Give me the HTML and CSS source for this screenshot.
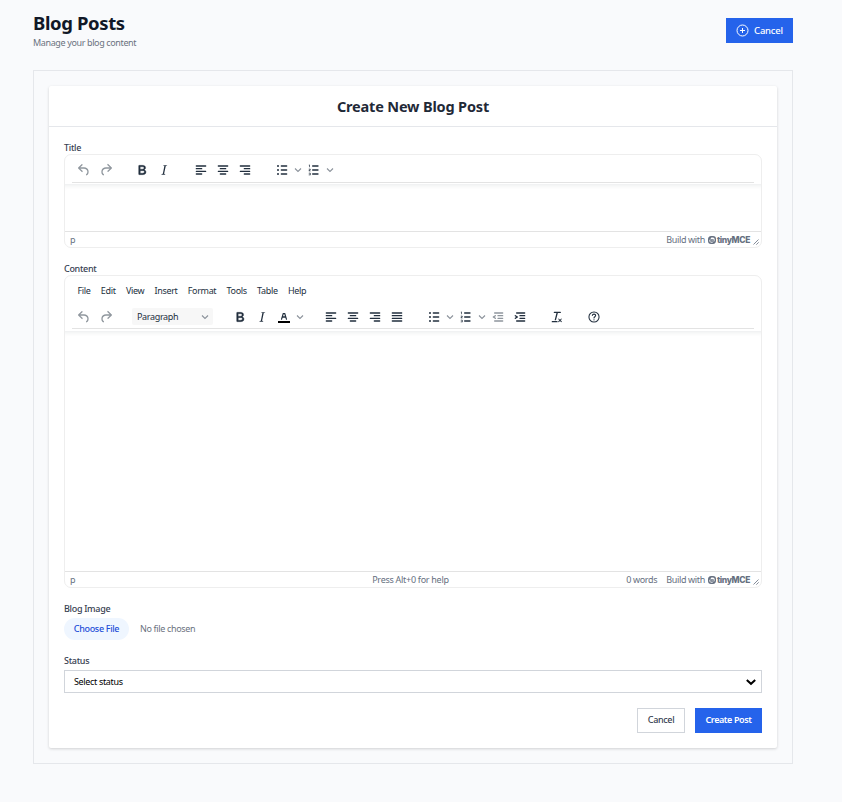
FILE: index.html
```html
<!DOCTYPE html>
<html lang="en">
<head>
<meta charset="utf-8">
<title>Blog Posts</title>
<link rel="stylesheet" href="styles.css">
</head>
<body>
<svg class="sprite" aria-hidden="true">
  <symbol id="undo" viewBox="0 0 24 24"><path d="M6.4 8H12c3.7 0 6.2 2 6.8 5.1.6 2.7-.4 5.6-2.3 6.8a1 1 0 0 1-1-1.8c1.1-.6 1.8-2.7 1.4-4.6-.5-2.1-2.1-3.5-4.9-3.5H6.4l3.3 3.3a1 1 0 1 1-1.4 1.4l-5-5a1 1 0 0 1 0-1.4l5-5a1 1 0 0 1 1.4 1.4L6.4 8Z"/></symbol>
  <symbol id="redo" viewBox="0 0 24 24"><path d="M17.6 10H12c-2.8 0-4.4 1.4-4.9 3.5-.4 2 .3 4 1.4 4.6a1 1 0 1 1-1 1.8c-2-1.2-2.9-4.1-2.3-6.8.6-3 3-5.1 6.8-5.1h5.6l-3.3-3.3a1 1 0 1 1 1.4-1.4l5 5a1 1 0 0 1 0 1.400l-5 5a1 1 0 0 1-1.4-1.4l3.3-3.3Z"/></symbol>
  <symbol id="bold" viewBox="0 0 24 24"><path fill-rule="evenodd" d="M7.8 19c-.3 0-.5 0-.6-.2l-.2-.5V5.7c0-.2 0-.4.2-.5l.6-.2h5c1.5 0 2.7.3 3.5 1 .7.6 1.1 1.4 1.1 2.5a3 3 0 0 1-.6 1.9c-.4.6-1 1-1.6 1.2.4.1.9.3 1.3.6s.8.7 1 1.2c.4.4.5 1 .5 1.6 0 1.3-.4 2.3-1.3 3-.8.7-2.1 1-3.8 1H7.8Zm5-8.3c.6 0 1.2-.1 1.6-.5.4-.3.6-.7.6-1.3 0-1.1-.8-1.7-2.3-1.7H9.3v3.5h3.4Zm.5 6c.7 0 1.3-.1 1.7-.4.4-.4.6-.9.6-1.5s-.2-1-.7-1.4c-.4-.3-1-.4-2-.4H9.4v3.8h4Z" stroke="currentColor" stroke-width=".5"/></symbol>
  <symbol id="italic" viewBox="0 0 24 24"><path d="m16.7 4.7-.1.9h-.3c-.6 0-1 0-1.4.3-.3.3-.4.6-.5 1.1l-2.1 9.8v.6c0 .5.4.8 1.4.8h.2l-.2.8H8l.2-.8h.2c1.1 0 1.8-.5 2-1.5l2-9.8.1-.5c0-.6-.4-.8-1.4-.8h-.3l.2-.9h5.8Z"/></symbol>
  <symbol id="left" viewBox="0 0 24 24"><path d="M5 5h14a1 1 0 0 1 0 2H5a1 1 0 1 1 0-2Zm0 4h8a1 1 0 0 1 0 2H5a1 1 0 1 1 0-2Zm0 8h8a1 1 0 0 1 0 2H5a1 1 0 0 1 0-2Zm0-4h14a1 1 0 0 1 0 2H5a1 1 0 0 1 0-2Z"/></symbol>
  <symbol id="center" viewBox="0 0 24 24"><path d="M5 5h14a1 1 0 0 1 0 2H5a1 1 0 1 1 0-2Zm3 4h8a1 1 0 0 1 0 2H8a1 1 0 1 1 0-2Zm0 8h8a1 1 0 0 1 0 2H8a1 1 0 0 1 0-2Zm-3-4h14a1 1 0 0 1 0 2H5a1 1 0 0 1 0-2Z"/></symbol>
  <symbol id="right" viewBox="0 0 24 24"><path d="M5 5h14a1 1 0 0 1 0 2H5a1 1 0 1 1 0-2Zm6 4h8a1 1 0 0 1 0 2h-8a1 1 0 0 1 0-2Zm0 8h8a1 1 0 0 1 0 2h-8a1 1 0 0 1 0-2Zm-6-4h14a1 1 0 0 1 0 2H5a1 1 0 0 1 0-2Z"/></symbol>
  <symbol id="justify" viewBox="0 0 24 24"><path d="M5 5h14a1 1 0 0 1 0 2H5a1 1 0 1 1 0-2Zm0 4h14a1 1 0 0 1 0 2H5a1 1 0 1 1 0-2Zm0 4h14a1 1 0 0 1 0 2H5a1 1 0 0 1 0-2Zm0 4h14a1 1 0 0 1 0 2H5a1 1 0 0 1 0-2Z"/></symbol>
  <symbol id="bullets" viewBox="0 0 24 24"><path d="M11 5h8a1 1 0 0 1 0 2h-8a1 1 0 0 1 0-2Zm0 6h8a1 1 0 0 1 0 2h-8a1 1 0 0 1 0-2Zm0 6h8a1 1 0 0 1 0 2h-8a1 1 0 0 1 0-2Z"/><circle cx="6" cy="6" r="1.5"/><circle cx="6" cy="12" r="1.5"/><circle cx="6" cy="18" r="1.5"/></symbol>
  <symbol id="numbers" viewBox="0 0 24 24"><path d="M10 17h8a1 1 0 0 1 0 2h-8a1 1 0 0 1 0-2Zm0-6h8a1 1 0 0 1 0 2h-8a1 1 0 0 1 0-2Zm0-6h8a1 1 0 0 1 0 2h-8a1 1 0 1 1 0-2ZM6 4v3.500c0 .3-.2.5-.5.5a.5.5 0 0 1-.5-.5V5h-.5a.5.5 0 0 1 0-1H6Zm-1 8.800.2.2h1.300c.3 0 .5.2.5.5s-.2.5-.5.5H4.900a1 1 0 0 1-.9-1V13c0-.4.3-.8.6-1l1.200-.4.2-.3a.2.2 0 0 0-.2-.2H4.500a.5.5 0 0 1-.5-.5c0-.3.2-.5.5-.5h1.600c.5 0 .9.4.9 1v.1c0 .4-.3.8-.6 1l-1.200.4-.2.3ZM7 17v2c0 .6-.4 1-1 1H4.500a.5.5 0 0 1 0-1h1.200c.2 0 .3-.1.3-.3 0-.2-.1-.3-.3-.3H4.400a.4.4 0 1 1 0-.8h1.300c.2 0 .3-.1.3-.3 0-.2-.1-.3-.3-.3H4.500a.5.5 0 1 1 0-1H6c.6 0 1 .4 1 1Z"/></symbol>
  <symbol id="outdent" viewBox="0 0 24 24"><path d="M7 5h12a1 1 0 0 1 0 2H7a1 1 0 1 1 0-2Zm5 4h7a1 1 0 0 1 0 2h-7a1 1 0 0 1 0-2Zm0 4h7a1 1 0 0 1 0 2h-7a1 1 0 0 1 0-2Zm-5 4h12a1 1 0 0 1 0 2H7a1 1 0 0 1 0-2Zm1.600-3.800a1 1 0 0 1-1.200 1.600l-3-2a1 1 0 0 1 0-1.600l3-2a1 1 0 0 1 1.200 1.600L6.800 12l1.800 1.200Z"/></symbol>
  <symbol id="indent" viewBox="0 0 24 24"><path d="M7 5h12a1 1 0 0 1 0 2H7a1 1 0 1 1 0-2Zm5 4h7a1 1 0 0 1 0 2h-7a1 1 0 0 1 0-2Zm0 4h7a1 1 0 0 1 0 2h-7a1 1 0 0 1 0-2Zm-5 4h12a1 1 0 0 1 0 2H7a1 1 0 0 1 0-2Zm-2.600-3.800L6.200 12l-1.800-1.200a1 1 0 0 1 1.200-1.600l3 2a1 1 0 0 1 0 1.600l-3 2a1 1 0 1 1-1.200-1.600Z"/></symbol>
  <symbol id="color" viewBox="0 0 24 24"><path class="swatch" d="M3 18h18v3H3z"/><path fill-rule="evenodd" d="M8.700 16h-.8a.5.5 0 0 1-.5-.6l2.700-9c.1-.3.3-.4.5-.4h2.800c.2 0 .4.1.5.4l2.700 9a.5.5 0 0 1-.5.600h-.8a.5.5 0 0 1-.4-.4l-.7-2.200c0-.3-.3-.4-.5-.4h-3.400c-.2 0-.4.1-.5.4l-.7 2.200c0 .3-.2.4-.4.4Zm2.600-7.600-.6 2a.5.5 0 0 0 .5.600h1.600a.5.5 0 0 0 .5-.6l-.6-2c0-.3-.3-.4-.5-.4h-.4c-.2 0-.4.1-.5.4Z"/></symbol>
  <symbol id="clear" viewBox="0 0 24 24"><path d="M13.200 6a1 1 0 0 1 0 .2l-2.600 10a1 1 0 0 1-1 .8h-.2a.8.8 0 0 1-.8-1l2.600-10H8a1 1 0 1 1 0-2h9a1 1 0 0 1 0 2h-3.800ZM5 18h7a1 1 0 0 1 0 2H5a1 1 0 0 1 0-2Zm13 1.500L16.500 18 15 19.500a.7.7 0 0 1-1-1l1.500-1.500-1.500-1.500a.7.7 0 0 1 1-1l1.500 1.500 1.500-1.500a.7.7 0 0 1 1 1L17.500 17l1.500 1.500a.7.7 0 0 1-1 1Z"/></symbol>
  <symbol id="help" viewBox="0 0 24 24"><path d="M9.500 9.600c.2-1.200 1.200-1.900 2.500-1.900 1.500 0 2.500.9 2.500 2.100 0 1.800-2.500 1.800-2.500 3.700" fill="none" stroke="currentColor" stroke-width="1.600" stroke-linecap="round"/><circle cx="12" cy="16.200" r="1"/><circle cx="12" cy="12" r="7.600" fill="none" stroke="currentColor" stroke-width="1.600"/></symbol>
  <symbol id="chev" viewBox="0 0 10 10"><path d="M2 3.500 5 6.500 8 3.500" fill="none" stroke="currentColor" stroke-width="1.100"/></symbol>
  <symbol id="tiny" viewBox="0 0 10 10"><path fill-rule="evenodd" d="M4.200 1H6a3 3 0 0 1 3 3v1.500A3.500 3.500 0 0 1 5.800 9H4a3 3 0 0 1-3-3V4.500A3.500 3.500 0 0 1 4.200 1Zm.2 1.500L6 2.400A1.600 1.600 0 0 1 7.600 4v1.300a2.100 2.100 0 0 1-.9 1.800v-2.900H3.600A2 2 0 0 1 4.400 2.500ZM2.400 5.800v-.9l.9-.6v2.500h3a2 2 0 0 1-2.300.8A1.700 1.700 0 0 1 2.400 5.800Zm2.200-.3v.6h1v-.6Z"/></symbol>
  <symbol id="grip" viewBox="0 0 8 8"><path d="M1.500 6.500 6.500 1.500M4.300 6.700 6.700 4.300" fill="none" stroke="currentColor" stroke-width=".8"/></symbol>
</svg>

<main class="page">
  <header class="page-head">
    <div>
      <h1>Blog Posts</h1>
      <p class="subtitle">Manage your blog content</p>
    </div>
    <button class="btn primary toggle">
      <svg viewBox="0 0 13 13"><circle cx="6.500" cy="6.500" r="5.500"/><path d="M6.500 4v5M4 6.500h5"/></svg><span>Cancel</span>
    </button>
  </header>

  <section class="panel">
    <form class="card">
      <h2>Create New Blog Post</h2>
      <div class="fields">
        <label class="label">Title</label>
        <div class="editor small">
          <div class="toolbar">
            <div class="group history"><svg><use href="#undo"/></svg><svg><use href="#redo"/></svg></div>
            <div class="group style"><svg><use href="#bold"/></svg><svg><use href="#italic"/></svg></div>
            <div class="group"><svg><use href="#left"/></svg><svg><use href="#center"/></svg><svg><use href="#right"/></svg></div>
            <div class="group"><svg><use href="#bullets"/></svg><svg class="chev"><use href="#chev"/></svg><svg><use href="#numbers"/></svg><svg class="chev"><use href="#chev"/></svg></div>
          </div>
          <div class="canvas"></div>
          <div class="status"><span>p</span><span class="brand"><span>Build with</span><svg class="mark"><use href="#tiny"/></svg><b>tinyMCE</b></span><svg class="grip"><use href="#grip"/></svg></div>
        </div>

        <label class="label">Content</label>
        <div class="editor large">
          <nav class="menu"><span>File</span><span>Edit</span><span>View</span><span>Insert</span><span>Format</span><span>Tools</span><span>Table</span><span>Help</span></nav>
          <div class="toolbar">
            <div class="group history"><svg><use href="#undo"/></svg><svg><use href="#redo"/></svg></div>
            <div class="block-select"><span>Paragraph</span><svg class="chev"><use href="#chev"/></svg></div>
            <div class="group style"><svg><use href="#bold"/></svg><svg><use href="#italic"/></svg><svg><use href="#color"/></svg><svg class="chev"><use href="#chev"/></svg></div>
            <div class="group"><svg><use href="#left"/></svg><svg><use href="#center"/></svg><svg><use href="#right"/></svg><svg><use href="#justify"/></svg></div>
            <div class="group"><svg><use href="#bullets"/></svg><svg class="chev"><use href="#chev"/></svg><svg><use href="#numbers"/></svg><svg class="chev"><use href="#chev"/></svg><svg class="off"><use href="#outdent"/></svg><svg><use href="#indent"/></svg></div>
            <div class="group"><svg><use href="#clear"/></svg></div>
            <div class="group"><svg><use href="#help"/></svg></div>
          </div>
          <div class="canvas"></div>
          <div class="status"><span>p</span><span class="hint">Press Alt+0 for help</span><span class="words">0 words</span><span class="brand"><span>Build with</span><svg class="mark"><use href="#tiny"/></svg><b>tinyMCE</b></span><svg class="grip"><use href="#grip"/></svg></div>
        </div>

        <label class="label">Blog Image</label>
        <div class="file"><span class="choose">Choose File</span><span class="none">No file chosen</span></div>

        <label class="label">Status</label>
        <div class="select"><span>Select status</span><svg viewBox="0 0 12 12"><path d="M1.800 4 6 7.800 10.200 4" fill="none" stroke="#000" stroke-width="2"/></svg></div>

        <div class="actions"><button type="button" class="btn outline">Cancel</button><button type="button" class="btn primary create">Create Post</button></div>
      </div>
    </form>
  </section>
</main>
</body>
</html>
```
FILE: styles.css
```css
* { box-sizing: border-box; }
body { margin: 0; background: #f9fafc; font: 9px/14px "Noto Sans", sans-serif; letter-spacing: -0.34px; color: #222f3e; }
h1, h2, p { margin: 0; }
svg { display: block; flex: none; fill: currentColor; }
.sprite { position: absolute; width: 0; height: 0; }

.page { width: 760px; margin-left: 33px; }
.page-head { height: 70px; display: flex; justify-content: space-between; align-items: flex-start; }
h1 { margin-top: 10px; font-size: 18.5px; line-height: 26px; font-weight: 700; letter-spacing: -0.38px; color: #111827; }
.subtitle { color: #6b7280; letter-spacing: -0.37px; }

.btn { height: 25px; border: 0; padding: 0 0 1px; font: inherit; letter-spacing: inherit; display: flex; align-items: center; justify-content: center; }
.primary { background: #2563eb; color: #fff; }
.toggle { width: 67px; margin-top: 18px; padding: 0; gap: 5px; font-size: 9.5px; font-weight: 500; letter-spacing: -0.2px; }
.toggle svg { width: 13px; height: 13px; fill: none; stroke: currentColor; }

.panel { height: 694px; border: 1px solid #e5e7eb; padding: 15px; }
.card { height: 662px; background: #fff; border-radius: 2px; box-shadow: 0 1px 3px rgba(0,0,0,.17); }
h2 { height: 41px; border-bottom: 1px solid #e5e7eb; text-align: center; font-size: 14.5px; line-height: 41px; font-weight: 700; letter-spacing: -0.17px; color: #1f2937; }
.fields { padding: 14px 15px 0; display: flex; flex-direction: column; }
.label { height: 13px; line-height: 14px; font-weight: 500; letter-spacing: -0.3px; color: #374151; }

.editor { display: flex; flex-direction: column; border: 1px solid #eee; border-radius: 7px; background: #fff; overflow: hidden; }
.small { height: 94px; margin-bottom: 14px; }
.large { height: 313px; margin-bottom: 14px; }
.toolbar { height: 28px; margin: 0 7px; padding-top: 4px; display: flex; align-items: center; border-bottom: 1px solid #e3e3e3; }
.small .toolbar { padding-top: 3px; }
.group { display: flex; align-items: center; margin-left: 15px; }
.group svg { width: 22px; height: 16px; }
.group svg.chev { width: 10px; height: 10px; color: #8b929b; }
.group .off { opacity: .5; }
.group.history { margin: 0 0 0 .5px; color: #222f3e80; }
.group.style { margin-left: 14.5px; }
.swatch { fill: #000; }
.block-select { width: 81px; height: 17px; margin: 0 0 0 15.5px; padding: 0 3px 0 5px; display: flex; align-items: center; justify-content: space-between; background: #f7f7f7; border-radius: 2px; }
.block-select + .group.style { margin-left: 15.5px; }
.block-select .chev { width: 10px; height: 10px; color: #8b929b; }
.canvas { flex: 1; margin-top: 2px; box-shadow: inset 0 5px 5px -4px rgba(34,47,62,.1); }
.small .canvas { margin-top: 1px; }
.menu { height: 25px; padding: 8px 0 0 12.5px; display: flex; gap: 10.3px; }
.status { height: 16px; padding: 0 1px 0 5px; border-top: 1px solid #e3e3e3; display: flex; align-items: center; color: #667080; }
.brand { margin-left: auto; display: flex; align-items: center; }
.mark { width: 10px; height: 10px; margin: 0 0 0 2px; }
.brand b { font: 800 8.5px/14px Inter, sans-serif; letter-spacing: -.38px; }
.grip { width: 8px; height: 8px; margin: 4px 0 0 2px; }
.hint { margin-left: 297px; letter-spacing: -0.28px; }
.words { margin-left: auto; }
.words + .brand { margin-left: 9px; }

.file { height: 22px; margin: 3px 0 14px; display: flex; align-items: center; gap: 11px; color: #6b7280; }
.choose { width: 65px; height: 22px; line-height: 22px; border-radius: 11px; background: #eff6ff; color: #1d4ed8; text-align: center; font-weight: 500; }
.select { height: 23px; margin-top: 3px; padding: 0 4px 0 9px; border: 1px solid #d1d5db; display: flex; align-items: center; justify-content: space-between; color: #000; }
.select svg { width: 12px; height: 12px; }
.actions { margin-top: 15px; display: flex; justify-content: flex-end; gap: 10px; }
.outline { width: 48px; border: 1px solid #d1d5db; background: #fff; color: #374151; font-weight: 500; }
.create { width: 67px; font-weight: 600; letter-spacing: -.4px; }
```
